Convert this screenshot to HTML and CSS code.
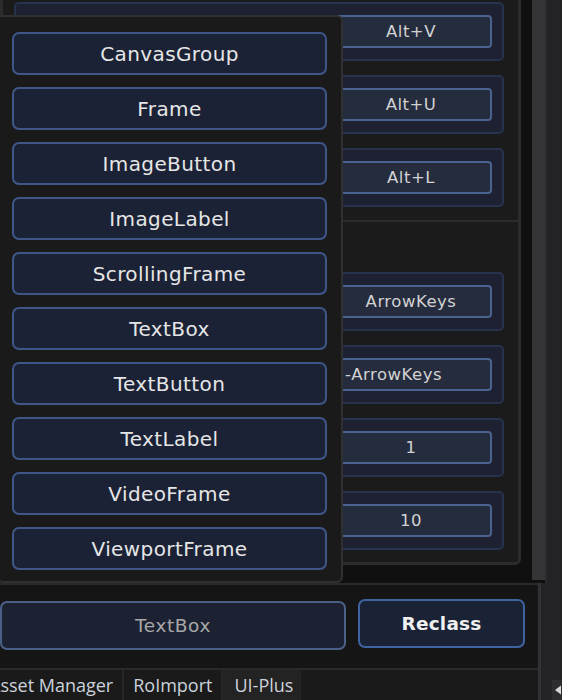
FILE: index.html
```html
<!DOCTYPE html>
<html>
<head>
<meta charset="utf-8">
<link rel="stylesheet" href="styles.css">
</head>
<body>
<div class="app">
  <div class="top">
    <div class="scroll">
      <div class="panel">
        <div class="group group-keys">
          <div class="card"><div class="field">Alt+V</div></div>
          <div class="card"><div class="field">Alt+U</div></div>
          <div class="card"><div class="field">Alt+L</div></div>
        </div>
        <div class="group group-nudge">
          <div class="group-head"></div>
          <div class="card"><div class="field">ArrowKeys</div></div>
          <div class="card"><div class="field field-long">-ArrowKeys</div></div>
          <div class="card"><div class="field">1</div></div>
          <div class="card"><div class="field">10</div></div>
        </div>
      </div>
    </div>
    <div class="track"><div class="thumb"></div></div>
    <div class="edge"></div>
    <div class="side"></div>
  </div>
  <div class="bottom">
    <div class="left">
      <div class="bar">
        <div class="input">TextBox</div>
        <div class="reclass">Reclass</div>
      </div>
      <div class="tabs">
        <div class="tab tab-first">Asset Manager</div>
        <div class="tab">RoImport</div>
        <div class="tab tab-active">UI-Plus</div>
      </div>
    </div>
    <div class="side side-bottom">
      <div class="arrow">
        <svg width="8" height="10" viewBox="0 0 8 10"><path d="M7 0.5 L1 5 L7 9.5 Z" fill="#d8d8d8"/></svg>
      </div>
    </div>
  </div>
  <div class="menu">
    <div class="menu-item">CanvasGroup</div>
    <div class="menu-item">Frame</div>
    <div class="menu-item">ImageButton</div>
    <div class="menu-item">ImageLabel</div>
    <div class="menu-item">ScrollingFrame</div>
    <div class="menu-item">TextBox</div>
    <div class="menu-item">TextButton</div>
    <div class="menu-item">TextLabel</div>
    <div class="menu-item">VideoFrame</div>
    <div class="menu-item">ViewportFrame</div>
  </div>
</div>
</body>
</html>
```
FILE: styles.css
```css
* { box-sizing: border-box; }
html, body { margin: 0; padding: 0; }
body {
  width: 562px;
  height: 700px;
  overflow: hidden;
  background: #1b1b1b;
  font-family: "DejaVu Sans", sans-serif;
}
.app {
  position: relative;
  width: 562px;
  height: 700px;
  display: flex;
  flex-direction: column;
}
.top {
  display: flex;
  height: 583px;
}
.scroll {
  width: 521px;
  height: 583px;
  overflow: hidden;
  background: #101010;
}
.panel {
  margin-top: -14px;
  border: 3px solid #2c2c2c;
  border-radius: 6px;
  background: #1b1b1b;
}
.group {
  display: flex;
  flex-direction: column;
  gap: 14px;
  padding: 13px 14px 13px 11px;
}
.group-nudge {
  border-top: 2px solid #2c2c2c;
  padding-top: 0;
  padding-bottom: 12px;
}
.group-head {
  height: 50px;
  margin-bottom: -14px;
}
.card {
  height: 59px;
  border: 2px solid #27324c;
  border-radius: 5px;
  background: #1d2131;
  display: flex;
  align-items: center;
  justify-content: flex-end;
  padding-right: 10px;
}
.field {
  width: 162px;
  height: 33px;
  border: 2px solid #4a6290;
  border-radius: 4px;
  background: #252c3e;
  color: #d2d2d2;
  font-size: 16.5px;
  letter-spacing: 0.5px;
  display: flex;
  align-items: center;
  justify-content: center;
  white-space: nowrap;
  overflow: hidden;
}
.field-long {
  justify-content: flex-end;
  padding-right: 48px;
}
.track {
  width: 24px;
  background: #101010;
  display: flex;
  justify-content: flex-end;
}
.thumb {
  width: 13px;
  height: 580px;
  background: #353538;
}
.edge {
  width: 2px;
  background: #2b2b2d;
}
.side {
  flex: 1;
  background: #232326;
}
.bottom {
  display: flex;
  height: 117px;
}
.left {
  width: 541px;
  border-right: 3px solid #323234;
  display: flex;
  flex-direction: column;
}
.bar {
  height: 85px;
  border-top: 2px solid #2a2a2a;
  background: #151515;
  display: flex;
  align-items: flex-start;
  gap: 12px;
  padding-top: 14px;
}
.input {
  width: 346px;
  height: 49px;
  margin-top: 2px;
  border: 2px solid #4b6089;
  border-radius: 7px;
  background: #1d2233;
  color: #a8a8a8;
  font-size: 18.5px;
  letter-spacing: 0.6px;
  display: flex;
  align-items: center;
  justify-content: center;
}
.reclass {
  width: 167px;
  height: 49px;
  border: 2px solid #3f63a0;
  border-radius: 7px;
  background: #1a2236;
  color: #f0f0f0;
  font-size: 18.5px;
  font-weight: bold;
  letter-spacing: 0.2px;
  display: flex;
  align-items: center;
  justify-content: center;
}
.tabs {
  flex: 1;
  border-top: 2px solid #2a2a2a;
  background: #1a1a1a;
  display: flex;
  overflow: hidden;
  font-family: "Open Sans", sans-serif;
  font-size: 18px;
  color: #ccd2da;
}
.tab {
  padding: 0 9px;
  line-height: 30px;
  white-space: nowrap;
  border-right: 2px solid #262626;
}
.tab-first {
  margin-left: -20px;
}
.tab-active {
  background: #232323;
  border-right: none;
  padding: 0 8px 0 11px;
}
.side-bottom {
  display: flex;
  flex-direction: column;
  justify-content: flex-end;
  align-items: flex-end;
  background: #232326;
}
.arrow {
  width: 10px;
  height: 20px;
  background: #2d2d30;
  display: flex;
  align-items: center;
  justify-content: flex-end;
}
.menu {
  position: absolute;
  left: -3px;
  top: 15px;
  width: 346px;
  height: 568px;
  border: 2px solid #303030;
  border-radius: 6px;
  background: #1a1a1a;
  padding: 15px 14px 11px 13px;
  display: flex;
  flex-direction: column;
  gap: 12px;
}
.menu-item {
  height: 43px;
  border: 2px solid #3e5688;
  border-radius: 7px;
  background: #1b2236;
  color: #e6e6e6;
  font-size: 20px;
  letter-spacing: 0.4px;
  display: flex;
  align-items: center;
  justify-content: center;
}
```
